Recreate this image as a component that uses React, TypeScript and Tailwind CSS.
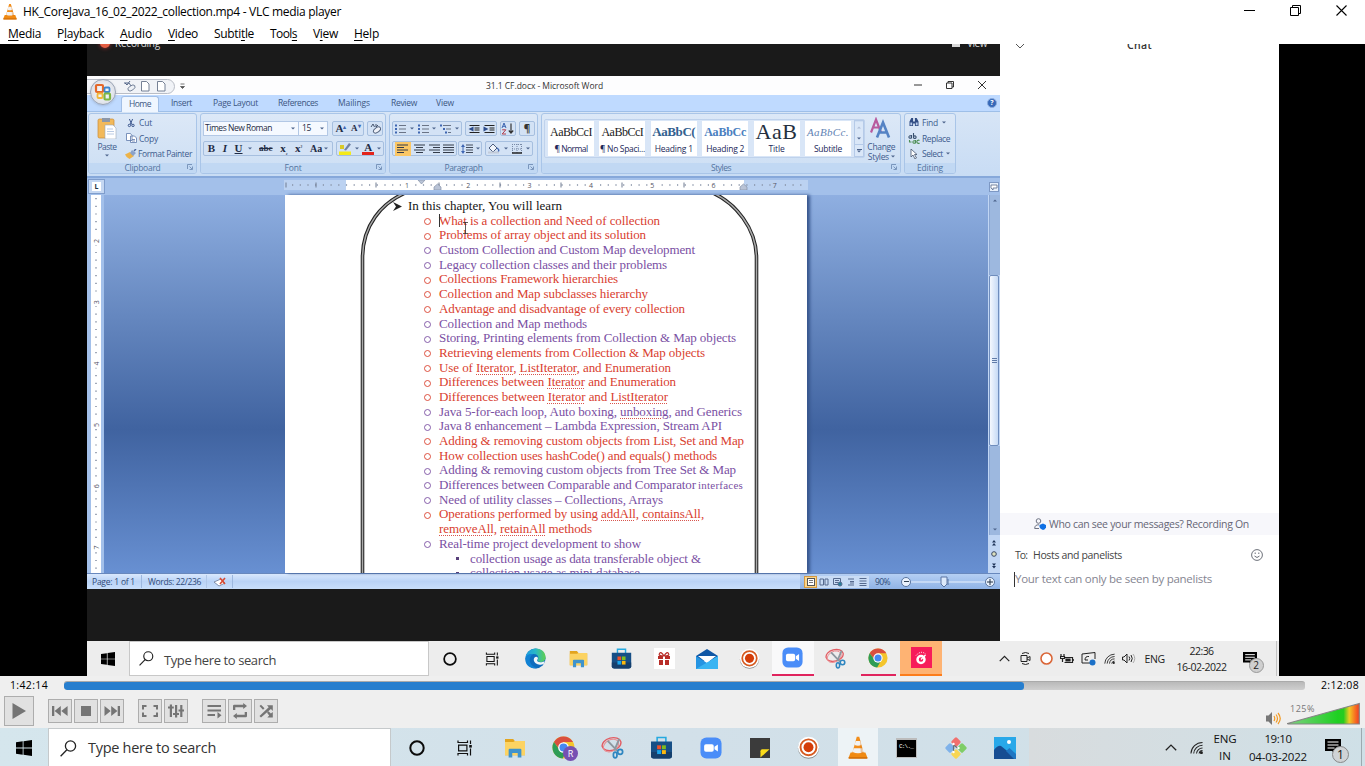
import React, { ReactNode, useLayoutEffect, useRef, useState } from 'react';

/* A run of text whose letter spacing is tuned so that it fills its box. */
function Fit({ className = '', children }: { className?: string; children: ReactNode }) {
  const box = useRef<HTMLSpanElement>(null);
  const run = useRef<HTMLSpanElement>(null);
  const [spacing, setSpacing] = useState(0);
  useLayoutEffect(() => {
    const b = box.current;
    const r = run.current;
    if (!b || !r) return;
    const count = (r.textContent || '').length;
    if (count > 0) setSpacing((b.getBoundingClientRect().width - r.getBoundingClientRect().width) / count);
  }, []);
  return (
    <span ref={box} className={`block shrink-0 whitespace-nowrap ${className}`}>
      <span ref={run} style={{ letterSpacing: spacing }}>{children}</span>
    </span>
  );
}

/* ---------- icons ---------- */

const Cone = ({ className }: { className: string }) => (
  <svg viewBox="0 0 24 28" className={className}>
    <path d="M3 20h18l2.500 6.500q0 1-1 1h-21q-1 0-1-1z" fill="#f08a12" />
    <path d="M.6 26h22.8v1.500H.6z" fill="#c96504" />
    <path d="M10.500 1h3l5.500 20q-7 4-14 0z" fill="#f28d1a" />
    <path d="M9.200 6h5.600l1.500 5q-4.300 1.800-8.600 0z" fill="#f2f2f2" />
    <path d="M6.700 15h10.600l1.300 4.500q-6.600 3-13.200 0z" fill="#f2f2f2" />
    <path d="M14 3l4.500 18q-1.500 1-3 1z" fill="#d96f08" opacity=".35" />
  </svg>
);

const WinLogo = ({ className }: { className: string }) => (
  <svg viewBox="0 0 16 16" className={className} fill="#000">
    <path d="M0 2.200 6.700 1.300v6.300H0zM7.500 1.200 16 0v7.600H7.500zM0 8.400h6.700v6.300L0 13.800zM7.500 8.400H16V16l-8.500-1.200z" />
  </svg>
);

const Lens = ({ className }: { className: string }) => (
  <svg viewBox="0 0 17 17" className={className} fill="none" stroke="#222" strokeWidth="1.3">
    <circle cx="10.500" cy="6" r="5.100" />
    <path d="M6.900 9.700.6 16.200" />
  </svg>
);

const Ring = ({ className }: { className: string }) => (
  <svg viewBox="0 0 16 16" className={className}>
    <circle cx="8" cy="8" r="6.700" fill="none" stroke="#0b0b0b" strokeWidth="2" />
  </svg>
);

const TaskView = ({ className }: { className: string }) => (
  <svg viewBox="0 0 16 16" className={className} fill="none" stroke="#111" strokeWidth="1.200">
    <path d="M1 .5v2h9.500v-2M1 15.500v-2h9.500v2M1.600 5.200h8.300v5.700H1.600zM13.500.5v3.500M13.500 8.500v7" />
    <path d="M12.200 5h2.600v2.600h-2.600z" fill="#111" stroke="none" />
  </svg>
);

const Edge = ({ className }: { className: string }) => (
  <svg viewBox="0 0 24 24" className={className}>
    <defs>
      <linearGradient id="edgeTop" x1="0" x2="1" y1="0.300" y2="0.300">
        <stop offset="0" stopColor="#1e9be0" />
        <stop offset=".5" stopColor="#2ab8c6" />
        <stop offset="1" stopColor="#5fd04e" />
      </linearGradient>
    </defs>
    <circle cx="12" cy="12" r="11.500" fill="#0f6cbd" />
    <path d="M.6 11C1.500 4.500 6.500.5 12.500.5 19 .5 23.500 5 23.500 10.500c0 3.500-2.500 5.500-5.500 5.500-2.200 0-3.700-1-3.700-2 0-.8 1-1.300 1-3 0-2.300-2.200-4.200-5.300-4.200C5.800 6.800 2 8.500.6 11z" fill="url(#edgeTop)" />
    <path d="M10 13.500c.3 3.500 4 6 8 5.500 2-.2 3.300-1 4-1.700l.5-2.300-2.500 1c-3 .9-6.200.2-6.200-1.900 0-.8 1-1.300 1-2.800-1.300-2.200-4.700-1.300-4.800 2.200z" fill="#f1f6fa" />
    <path d="M.5 12C1.500 7.500 6 6.300 9.500 7c-3 1.200-5 5-3.700 9 1.200 3.500 4.200 6.300 8.200 7C6.500 24.500-.5 19 .5 12z" fill="#1182d4" />
  </svg>
);

const Folder = ({ className }: { className: string }) => (
  <svg viewBox="0 0 24 22" className={className}>
    <path d="M1 1h9l2 2.500H22q1 0 1 1V19H1z" fill="#e3a51f" />
    <path d="M1 4.500h9l2-1.200h11V19H1z" fill="#fcd362" />
    <path d="M5 21.500V13q0-1.200 1.200-1.200h11.600q1.200 0 1.200 1.200v8.500h-4v-5H9v5z" fill="#3f93cc" />
  </svg>
);

const Store = ({ className }: { className: string }) => (
  <svg viewBox="0 0 24 26" className={className}>
    <path d="M7 7V1.500h10V7" fill="none" stroke="#25a9e0" strokeWidth="1.800" />
    <path d="M0 6h24v16.500q0 3-3 3H3q-3 0-3-3z" fill="#174f86" />
    <path d="M0 18h24v4.500q0 3-3 3H3q-3 0-3-3z" fill="#153f6d" />
    <path d="M7 10.500h4.500V15H7z" fill="#f0502a" />
    <path d="M12.500 10.500H17V15h-4.500z" fill="#80bc1c" />
    <path d="M7 16h4.500v4.500H7z" fill="#19a5ec" />
    <path d="M12.500 16H17v4.500h-4.500z" fill="#fdb90e" />
  </svg>
);

const ZoomApp = ({ className }: { className: string }) => (
  <svg viewBox="0 0 24 24" className={className}>
    <rect x=".5" y=".5" width="23" height="23" rx="6.500" fill="#4a8df8" />
    <rect x="4.500" y="7.800" width="10.500" height="8.400" rx="2" fill="#fff" />
    <path d="m15.800 10.700 3.700-2.600v7.800l-3.700-2.600z" fill="#fff" />
  </svg>
);

const Snip = ({ className }: { className: string }) => (
  <svg viewBox="0 0 24 24" className={className} fill="none">
    <ellipse cx="11" cy="8.500" rx="10" ry="6.500" transform="rotate(-15 11 8.500)" stroke="#e25c63" strokeWidth="1.500" />
    <ellipse cx="10.500" cy="10" rx="8.500" ry="6" transform="rotate(-28 10.500 10)" stroke="#eb8a8e" strokeWidth="1" />
    <path d="m7 5 10 10.500M19 3l-5 12" stroke="#8d979f" strokeWidth="2" />
    <circle cx="20" cy="16.500" r="2.600" stroke="#2f86c0" strokeWidth="1.800" />
    <ellipse cx="14.800" cy="19.800" rx="1.900" ry="3" stroke="#2f86c0" strokeWidth="1.800" />
  </svg>
);

const ChromeApp = ({ className }: { className: string }) => (
  <svg viewBox="0 0 24 24" className={className}>
    <circle cx="12" cy="12" r="11.500" fill="#f4c52c" />
    <path d="M2 6.300A11.500 11.500 0 0 1 22 6.300H12L8 14z" fill="#da4f3e" />
    <path d="M2 6.300A11.500 11.500 0 0 0 11 23.500l5-9-8 0z" fill="#2e9c56" />
    <circle cx="12" cy="12" r="5.600" fill="#fff" />
    <circle cx="12" cy="12" r="4.200" fill="#4688f1" />
  </svg>
);

const Recorder = ({ className }: { className: string }) => (
  <svg viewBox="0 0 24 24" className={className}>
    <circle cx="12" cy="12.800" r="11" fill="#8c8c8c" />
    <circle cx="12" cy="11.800" r="11" fill="#fff" />
    <circle cx="12" cy="11.800" r="8.300" fill="none" stroke="#d65a20" strokeWidth="2" />
    <circle cx="12" cy="11.800" r="5.200" fill="#d43d08" />
  </svg>
);

const Wifi = ({ className }: { className: string }) => (
  <svg viewBox="0 0 14 14" className={className} fill="none" stroke="#222" strokeWidth="1.100">
    <path d="M1 13.500A12.500 12.500 0 0 1 13.500 1.500M4 13.500a9.500 9.500 0 0 1 9.500-9M7 13.500a6.500 6.500 0 0 1 6.500-6M9.800 13.500a3.800 3.800 0 0 1 3.700-3.200" />
    <circle cx="12.300" cy="12.600" r="1" fill="#222" />
  </svg>
);

const Bubble = ({ className }: { className: string }) => (
  <svg viewBox="0 0 16 16" className={className}>
    <path d="M0 0h16v12h-5v4l-4-4H0z" fill="#000" />
    <path d="M2.500 3h11M2.500 6h11M2.500 9h7" stroke="#fff" strokeWidth="1.100" />
  </svg>
);

const Up = ({ className }: { className: string }) => (
  <svg viewBox="0 0 12 7" className={className} fill="none" stroke="#222" strokeWidth="1.300">
    <path d="m.8 6.300 5.200-5.200 5.200 5.200" />
  </svg>
);

const Drop = () => (
  <svg viewBox="0 0 4 3" className="h-[3px] w-[4px] shrink-0"><path d="M0 .5h4L2 2.500z" fill="#4d648c" /></svg>
);

const Launcher = () => (
  <svg viewBox="0 0 6 6" className="h-[6px] w-[6px]" fill="none" stroke="#6885ad" strokeWidth=".8">
    <path d="M.5 5V.5H5M2.500 2.500l2.500 2.500M5.500 2.500v3h-3" />
  </svg>
);

/* ---------- VLC window ---------- */

const ui = "font-['Open_Sans',sans-serif]";

function TitleBar() {
  return (
    <div className="flex h-[23px] items-center bg-white">
      <Cone className="ml-[3px] h-[17px] w-[14px]" />
      <Fit className="ml-[6px] w-[318px] text-[12px] leading-[16px]">HK_CoreJava_16_02_2022_collection.mp4 - VLC media player</Fit>
      <div className="-mt-[3px] ml-auto flex items-center gap-[35px] pr-[18px]">
        <svg viewBox="0 0 11 11" className="h-[11px] w-[11px]"><path d="M0 5.500h11" stroke="#000" /></svg>
        <svg viewBox="0 0 11 11" className="h-[11px] w-[11px]" fill="none" stroke="#000"><path d="M.5 2.500h8v8h-8zM2.500 2.500v-2h8v8h-2" /></svg>
        <svg viewBox="0 0 11 11" className="h-[11px] w-[11px]"><path d="m.5.5 10 10m0-10-10 10" stroke="#000" strokeWidth="1.100" /></svg>
      </div>
    </div>
  );
}

function MenuBar() {
  const items: [string, string, string, string][] = [
    ['', 'M', 'edia', 'w-[33px]'],
    ['P', 'l', 'ayback', 'w-[47px]'],
    ['', 'A', 'udio', 'w-[32px]'],
    ['', 'V', 'ideo', 'w-[30px]'],
    ['Subti', 't', 'le', 'w-[40px]'],
    ['Tool', 's', '', 'w-[27px]'],
    ['V', 'i', 'ew', 'w-[25px]'],
    ['', 'H', 'elp', 'w-[25px]'],
  ];
  return (
    <div className="flex h-[21px] items-center gap-4 bg-white pl-2 text-[12px] leading-[18px] text-black">
      {items.map(([a, b, c, w]) => (
        <Fit key={a + b + c} className={w}>{a}<u className="underline-offset-2">{b}</u>{c}</Fit>
      ))}
    </div>
  );
}

function Btn({ children, big = false, className = '' }: { children: ReactNode; big?: boolean; className?: string }) {
  return (
    <div className={`flex items-center justify-center border border-[#adadad] bg-[#e1e1e1] ${big ? 'h-[30px] w-[30px]' : 'h-[24px] w-[24px]'} ${className}`}>
      <svg viewBox="0 0 16 16" className={big ? 'h-[16px] w-[16px]' : 'h-[16px] w-[16px]'} fill="#757575" stroke="none">{children}</svg>
    </div>
  );
}

function Player() {
  return (
    <div className="h-[52px] bg-[#efefef]">
      <div className="flex h-[20px] items-center text-[10.5px] text-black">
        <Fit className="ml-[10px] w-[38px]">1:42:14</Fit>
        <div className="-mt-[2px] ml-[16px] h-[9px] w-[1241px] overflow-hidden rounded-[3px] border-t border-[#aaa] bg-linear-to-b from-[#b9b9b9] to-[#cfcfcf]">
          <div className="h-full w-[960px] rounded-[3px] bg-[#277ece]" />
        </div>
        <Fit className="ml-[16px] w-[38px]">2:12:08</Fit>
      </div>
      <div className="flex h-[30px] items-center pl-[4px]">
        <Btn big><path d="M1.500 0 15 8 1.500 16z" /></Btn>
        <Btn className="ml-[14px]"><path d="M0 3h2.300v10H0zM8.800 3v10L2.600 8zM15.600 3v10L9.300 8z" /></Btn>
        <Btn className="ml-[2px]"><path d="M3 3h10v10H3z" /></Btn>
        <Btn className="ml-[2px]"><path d="M13.700 3H16v10h-2.300zM7.200 3v10l6.200-5zM.5 3v10l6.200-5z" /></Btn>
        <Btn className="ml-[14px]"><path d="M0 2h4.500v2H2v2.500H0zM11.500 2H16v4.500h-2V4h-2.500zM0 9.500h2V12h2.500v2H0zM14 9.500h2V14h-4.500v-2H14z" /></Btn>
        <Btn className="ml-[2px]"><path d="M1.800 1.500H4V14H1.800zM0 3.500h5.800v2H0zM7 2h2.200v12.500H7zM5 10h6v2H5zM12.200 2h2.200v12h-2.200zM10.500 6.500H16v2h-5.500z" /></Btn>
        <Btn className="ml-[14px]"><path d="M1.500 2H15v2H1.500zM1.500 6.500H15v2H1.500zM1.500 11H9v2H1.500zM11.500 9v6.500l4-3.200z" /></Btn>
        <Btn className="ml-[2px]"><path d="M1 7V3q0-1.200 1.200-1.200h9V0L15 3l-3.800 3V4.200H3.300V7zM15 9v4q0 1.200-1.200 1.200h-9V16L1 13l3.800-3v1.800h7.900V9z" /></Btn>
        <Btn className="ml-[2px]"><path d="M1.500 3 3 1.700l3.500 3.500L5 6.700zM1.500 13 10.700 4.200 9 2.200h5.800V8l-1.900-2L3 14.500zM9 9.700l1.500-1.500 2.400 2.300L14.800 9v5.500H9.300l1.900-2z" /></Btn>
        <svg viewBox="0 0 15 13" className="mt-[14px] ml-[988px] h-[13px] w-[15px]">
          <path d="M0 3.500h2.500L6 0v13L2.500 9.500H0z" fill="#777" />
          <path d="M8 4q1.500 2.500 0 5M10 2.500q3 4 0 8M12 1q4.500 5.500 0 11" fill="none" stroke="#f39a22" strokeWidth="1.200" />
        </svg>
        <div className="relative mt-[5px] ml-[6px] h-[24px] w-[73px]">
          <svg viewBox="0 0 73 24" className="h-[24px] w-[73px]">
            <defs>
              <linearGradient id="vol">
                <stop offset="0" stopColor="#7fd083" /><stop offset=".7" stopColor="#1fd022" />
                <stop offset=".78" stopColor="#27cc20" /><stop offset=".86" stopColor="#efcc24" />
                <stop offset=".93" stopColor="#f77d22" /><stop offset="1" stopColor="#f13a22" />
              </linearGradient>
            </defs>
            <path d="M.5 21.500 72.300 1.500v20.500H1z" fill="url(#vol)" stroke="#858585" strokeWidth="1.200" />
          </svg>
          <Fit className="absolute top-[1px] left-[3px] w-[25px] text-[9px] leading-[12px] text-[#777]">125%</Fit>
        </div>
      </div>
    </div>
  );
}

function Slot({ children, className = '' }: { children: ReactNode; className?: string }) {
  return <div className={`flex h-full w-[49px] shrink-0 items-center justify-center ${className}`}>{children}</div>;
}

function HostTaskbar() {
  return (
    <div className="flex h-[38px] bg-linear-to-r from-[#d5e6ed] via-[#d2e0e9] to-[#cfe0e7]">
      <div className="flex w-[48px] items-center justify-center"><WinLogo className="mt-[2px] h-[16px] w-[16px]" /></div>
      <div className="flex w-[343px] items-center border border-b-0 border-[#c5c9cb] bg-white pt-px pl-[11px]">
        <Lens className="h-[17px] w-[17px]" />
        <Fit className="ml-[11px] w-[128px] text-[14.5px] text-[#333]">Type here to search</Fit>
      </div>
      <div className="flex h-full pt-[1px] pl-px">
        <Slot><Ring className="h-[16px] w-[16px]" /></Slot>
        <Slot><TaskView className="ml-[-2px] h-[16px] w-[16px]" /></Slot>
        <Slot><Folder className="h-[20px] w-[22px]" /></Slot>
        <Slot>
          <div className="relative">
            <ChromeApp className="h-[23px] w-[23px]" />
            <span className="absolute top-[10px] left-[11px] flex h-[15px] w-[15px] items-center justify-center rounded-full bg-[#7650b2] text-[9px] text-white">R</span>
          </div>
        </Slot>
        <Slot><Snip className="h-[23px] w-[23px]" /></Slot>
        <Slot><Store className="h-[23px] w-[21px]" /></Slot>
        <Slot><ZoomApp className="h-[24px] w-[22px]" /></Slot>
        <Slot>
          <svg viewBox="0 0 22 22" className="h-[22px] w-[20px]"><path d="M0 0h22v22H0z" fill="#3b3b3b" /><path d="M11.500 21.500v-7q0-2 2-2h8z" fill="#fbdc1a" /></svg>
        </Slot>
        <Slot><Recorder className="h-[23px] w-[23px]" /></Slot>
        <div className="-mt-[1px] flex h-[38px] w-[49px] justify-center">
          <div className="flex w-[40px] items-center justify-center bg-[#edf3f6]"><Cone className="h-[23px] w-[20px]" /></div>
        </div>
        <Slot>
          <div className="h-[20px] w-[21px] border border-t-2 border-[#bcbcbc] bg-black pt-[3px] pl-[2px] font-['Liberation_Mono',monospace] text-[6px] leading-[7px] text-white"><Fit className="w-[14px]">C:\._</Fit></div>
        </Slot>
        <Slot>
          <svg viewBox="0 0 24 24" className="h-[24px] w-[24px]">
            <g transform="rotate(45 12 12)">
              <rect x="4" y="4" width="7.500" height="7.500" rx="1.500" fill="#f1706e" /><rect x="12.500" y="4" width="7.500" height="7.500" rx="1.500" fill="#7fcd67" />
              <rect x="4" y="12.500" width="7.500" height="7.500" rx="1.500" fill="#7fb2ea" /><rect x="12.500" y="12.500" width="7.500" height="7.500" rx="1.500" fill="#f8d653" />
            </g>
            <path d="M9.500 8v8M9.500 9l4 3" stroke="#67727a" strokeWidth="1.200" />
            <circle cx="9.500" cy="8" r="1.200" fill="#fff" /><circle cx="9.500" cy="16" r="1.200" fill="#fff" /><circle cx="14.500" cy="12" r="1.200" fill="#fff" />
          </svg>
        </Slot>
        <Slot>
          <svg viewBox="0 0 22 22" className="h-[22px] w-[22px]"><path d="M0 0h22v22H0z" fill="#28a8e9" /><path d="M0 13q4-5 7-4l15 12v1H0z" fill="#174d92" /><path d="m12 14 3.500-3L22 17v5h-2z" fill="#1f76c2" /><circle cx="15" cy="5" r="2" fill="#fff" /></svg>
        </Slot>
      </div>
      <div className="flex flex-1 items-center bg-linear-to-r from-[#d8dcde] to-[#cfe0e7]">
        <Up className="ml-[136px] h-[7px] w-[12px]" />
        <Wifi className="ml-[13px] h-[13px] w-[13px]" />
        <div className="ml-[10px] flex w-[24px] flex-col items-center gap-[2px] text-[11.5px] leading-[15px] text-[#111]">
          <Fit className="w-[23px]">ENG</Fit><Fit className="w-[12px]">IN</Fit>
        </div>
        <div className="ml-[12px] flex w-[58px] flex-col items-center gap-[3px] text-[11.5px] leading-[15px] text-[#111]">
          <Fit className="w-[27px]">19:10</Fit><Fit className="w-[58px]">04-03-2022</Fit>
        </div>
        <div className="relative ml-[18px]">
          <Bubble className="h-[16px] w-[16px]" />
          <span className="absolute top-[7px] left-[7px] flex h-[17px] w-[17px] items-center justify-center rounded-full border border-[#888] bg-[#cfd3d5] text-[12px] text-[#111]">1</span>
        </div>
        <div className="ml-auto h-full w-[4px] border-l border-[#9caab0]" />
      </div>
    </div>
  );
}

/* ---------- Word window ---------- */

function WordTitle() {
  return (
    <div className="relative flex h-[19px] items-center bg-[#fdfdfe]">
      <div className="-ml-[2px] mt-[1px] h-[15px] w-[90px] rounded-r-full border border-[#b9bdc6] bg-[#f1f3f7]" />
      <svg viewBox="0 0 70 12" className="-ml-[52px] h-[12px] w-[70px]">
        <path d="M1 3h5l2 3M2 3l2 2 3-4" stroke="#56688a" fill="none" /><ellipse cx="8.500" cy="8" rx="4" ry="2.300" transform="rotate(-35 8.500 8)" fill="#eef1f6" stroke="#63718b" strokeWidth=".8" />
        <path d="M18.500 1.500h5l2.500 2.500v7h-7.500zM34.500 1.500h5l2.500 2.500v7h-7.500z" fill="#fff" stroke="#68748a" strokeWidth=".9" />
        <path d="M57.500 4h4M57.500 6.500h4l-2 2z" stroke="#555" strokeWidth=".8" fill="#555" />
      </svg>
      <Fit className="ml-[293px] w-[117px] text-[8.5px] leading-[12px] text-[#333]">31.1 CF.docx  -  Microsoft Word</Fit>
      <div className="-mt-px ml-auto flex items-center gap-[24px] pr-[14px]">
        <svg viewBox="0 0 8 8" className="h-[8px] w-[8px]"><path d="M0 4h8" stroke="#333" /></svg>
        <svg viewBox="0 0 8 8" className="h-[8px] w-[8px]" fill="none" stroke="#333"><path d="M.5 2h5.500v5.500H.5zM2 2V.5h5.500V6H6" /></svg>
        <svg viewBox="0 0 8 8" className="h-[8px] w-[8px]"><path d="m0 0 8 8m0-8-8 8" stroke="#333" /></svg>
      </div>
      <div className="absolute top-[3px] left-[3px] z-10 flex h-[26px] w-[26px] items-center justify-center rounded-full border border-[#9aa3b4] bg-radial from-white to-[#cfd4df] shadow">
        <svg viewBox="0 0 18 18" className="h-[18px] w-[18px]" fill="none" strokeWidth="2.200">
          <rect x="2" y="2" width="7" height="7" rx="1" stroke="#e4682a" /><rect x="10.500" y="4.500" width="5" height="4.500" rx="1" stroke="#3d86cf" strokeWidth="1.800" />
          <rect x="3.500" y="10.500" width="5" height="4.500" rx="1" stroke="#f1b73a" strokeWidth="1.800" /><rect x="10.500" y="10.500" width="5.500" height="6" rx="1" stroke="#7eb544" />
        </svg>
      </div>
    </div>
  );
}

function Tabs() {
  return (
    <div className="flex h-[16px] items-center bg-[#bfdaff] pl-[34px] text-[8.5px] leading-[12px] text-[#3c5682]">
      <div className="mt-px flex h-[16px] w-[38px] items-center justify-center rounded-t-[3px] border border-b-0 border-[#a2bfe6] bg-[#eff6ff]"><Fit className="w-[22px]">Home</Fit></div>
      <Fit className="ml-[12px] w-[21px]">Insert</Fit>
      <Fit className="ml-[21px] w-[45px]">Page Layout</Fit>
      <Fit className="ml-[20px] w-[40px]">References</Fit>
      <Fit className="ml-[20px] w-[32px]">Mailings</Fit>
      <Fit className="ml-[21px] w-[26px]">Review</Fit>
      <Fit className="ml-[19px] w-[18px]">View</Fit>
      <div className="mr-[3px] ml-auto flex h-[10px] w-[10px] items-center justify-center rounded-full border border-[#8babdd] bg-[#3668b8] text-[7px] font-bold text-white">?</div>
    </div>
  );
}

function Group({ label, labelWidth, width, children, launcher = true }: { label: string; labelWidth: string; width: string; children: ReactNode; launcher?: boolean }) {
  return (
    <div className={`flex h-[61px] shrink-0 flex-col overflow-hidden rounded-[3px] border border-[#a9c5e8] bg-linear-to-b from-[#dce8f7] to-[#cddff4] ${width}`}>
      <div className="h-[49px]">{children}</div>
      <div className="relative flex h-[10px] items-center justify-center bg-[#c1d8f3] text-[8.5px] leading-[10px] text-[#53749f]">
        <Fit className={labelWidth}>{label}</Fit>
        {launcher && <div className="absolute top-[1px] right-[3px]"><Launcher /></div>}
      </div>
    </div>
  );
}

const box = 'flex h-[15px] shrink-0 items-center justify-around rounded-[2px] border border-[#a6bfdf] bg-[#d3e2f5]';

const Lines = ({ d }: { d: string }) => (
  <svg viewBox="0 0 11 10" className="h-[10px] w-[11px]"><path d={d} stroke="#333b49" strokeWidth="1.200" fill="none" /></svg>
);
const Bullets = ({ kind }: { kind: number }) => (
  <svg viewBox="0 0 11 10" className="h-[10px] w-[11px]" fill="none" strokeWidth="1.100">
    <path d={kind === 2 ? 'M0 1.500h2M3 5h2M5 8.500h2' : 'M0 1.500h2M0 5h2M0 8.500h2'} stroke="#3f66b2" strokeWidth="1.800" />
    <path d={kind === 2 ? 'M3 1.500h8M6 5h5M8 8.500h3' : 'M4 1.500h7M4 5h7M4 8.500h7'} stroke="#6a7486" />
  </svg>
);
const Indent = ({ d }: { d: string }) => (
  <svg viewBox="0 0 11 10" className="h-[10px] w-[12px]"><path d="M1 1.500h10M6 4h5M6 6h5M1 8.500h10" stroke="#222" strokeWidth="1.200" /><path d={d} fill="#2d4c8c" /></svg>
);
const Eraser = () => (
  <svg viewBox="0 0 11 11" className="h-[11px] w-[11px]" fill="none"><path d="M1 4 3 1l1.500 3M6 1v3l2-2" stroke="#46556e" /><ellipse cx="7" cy="7" rx="4" ry="2.300" transform="rotate(-35 7 7)" fill="#eef1f8" stroke="#56657f" /></svg>
);

function Clipboard() {
  return (
    <Group label="Clipboard" labelWidth="w-[36px]" width="w-[109px]">
      <div className="flex text-[8.5px] leading-[11px] text-[#3d5b8d]">
        <div className="flex w-[36px] flex-col items-center pt-[3px]">
          <svg viewBox="0 0 20 22" className="h-[22px] w-[20px]">
            <rect x="1" y="2" width="16" height="19" rx="1.500" fill="#f2b95a" stroke="#c98b36" strokeWidth=".7" /><path d="M5 1h8v4H5z" fill="#8c97a8" />
            <path d="M8 8h8l3 3v11H8z" fill="#fff" stroke="#9aa7bb" strokeWidth=".6" /><path d="M10 12h6M10 14.500h7M10 17h7" stroke="#a8bedd" strokeWidth=".8" />
          </svg>
          <Fit className="mt-[2px] w-[19px]">Paste</Fit>
          <div className="mt-[2px]"><Drop /></div>
        </div>
        <div className="flex flex-col pt-[1px]">
          <div className="flex h-[15.6px] items-center gap-[5px]">
            <svg viewBox="0 0 10 10" className="ml-[2px] h-[10px] w-[8px]" fill="none" stroke="#37538b" strokeWidth="1.200"><path d="M3 0l3 7M7 0 4 7" /><circle cx="3" cy="8" r="1.500" /><circle cx="7.500" cy="8" r="1.500" /></svg>
            <Fit className="-ml-[1px] w-[13px]">Cut</Fit>
          </div>
          <div className="flex h-[15.6px] items-center gap-[3px]">
            <svg viewBox="0 0 11 10" className="ml-[1px] h-[10px] w-[11px]" fill="#fff" stroke="#5d79ab" strokeWidth=".8"><path d="M.5.5h4l1.500 2v5H.5zM4.500 3h4l2 2v4.500h-6z" /><path d="M6 6.500h3M6 8h3" /></svg>
            <Fit className="-ml-[1px] w-[19px]">Copy</Fit>
          </div>
          <div className="flex h-[15.6px] items-center gap-[2px]">
            <svg viewBox="0 0 12 10" className="h-[10px] w-[12px]"><path d="M0 5.500 5 3l4 4-4.500 3q-3-1-4.500-4.500z" fill="#ecb349" /><path d="M7 1l4 3-3 3-3-3z" fill="#8aa2cb" /><path d="m9 2 2-2" stroke="#4b659a" strokeWidth="1.500" /></svg>
            <Fit className="-ml-[1px] w-[54px]">Format Painter</Fit>
          </div>
        </div>
      </div>
    </Group>
  );
}

const serif = "font-['Liberation_Serif',serif]";

function FontGroup() {
  return (
    <Group label="Font" labelWidth="w-[17px]" width="w-[186px]">
      <div className="flex flex-col gap-[5px] px-[2px] pt-[7px] text-[#1f2c45]">
        <div className="flex items-center">
          <div className="flex h-[15px] w-[96px] items-center justify-between border border-[#b3c8e5] bg-[#f5f9ff] pr-[3px] pl-[1px] text-[8.5px]"><Fit className="w-[67px]">Times New Roman</Fit><Drop /></div>
          <div className="flex h-[15px] w-[29px] items-center justify-between border border-l-0 border-[#b3c8e5] bg-[#f5f9ff] pr-[3px] pl-[3px] text-[8.5px]"><Fit className="w-[9px]">15</Fit><Drop /></div>
          <div className={`${box} ml-[4px] w-[32px] ${serif} font-bold`}><span className="text-[11px]">A<sup className="text-[6px] text-[#3f66b2]">▴</sup></span><span className="text-[9px]">A<sup className="text-[6px] text-[#3f66b2]">▾</sup></span></div>
          <div className={`${box} ml-[3px] w-[16px]`}><Eraser /></div>
        </div>
        <div className="flex items-center">
          <div className={`${box} w-[130px] ${serif} text-[11px] font-bold`}>
            <span>B</span><span className="italic">I</span><span className="flex items-center gap-[5px]"><u>U</u><Drop /></span><s className="text-[9px]">abc</s><span>x<sub className="text-[6px]">₂</sub></span><span>x<sup className="text-[6px]">²</sup></span><span className="flex items-center gap-[2px] text-[10px]">Aa<Drop /></span>
          </div>
          <div className={`${box} ml-[3px] w-[48px]`}>
            <svg viewBox="0 0 13 13" className="h-[13px] w-[13px]"><path d="M0 9.500h12V13H0z" fill="#f5ea1b" /><path d="M1 3h4v4H1z" fill="#d9c928" /><path d="m5 8 5-7 2 1.500-5 6z" fill="#7183a5" /></svg><Drop />
            <div className={`flex h-[13px] w-[12px] flex-col items-center border-b-[3px] border-[#e3241c] ${serif} text-[11px] leading-[10px] font-bold`}>A</div><Drop />
          </div>
        </div>
      </div>
    </Group>
  );
}

function ParagraphGroup() {
  return (
    <Group label="Paragraph" labelWidth="w-[38px]" width="w-[149px]">
      <div className="flex flex-col gap-[5px] pt-[7px] pl-[2px]">
        <div className="flex items-center">
          <div className={`${box} w-[70px]`}><Bullets kind={0} /><Drop /><Bullets kind={1} /><Drop /><Bullets kind={2} /><Drop /></div>
          <div className={`${box} ml-[3px] w-[32px]`}><Indent d="M5 2.500v5L0 5z" /><Indent d="M0 2.500v5L5 5z" /></div>
          <div className={`${box} ml-[3px] w-[16px]`}>
            <svg viewBox="0 0 14 13" className="h-[13px] w-[14px]" fill="none">
              <path d="m1 6 2-5 2 5M2 4.300h2.200" stroke="#3c64b0" /><path d="M1.200 7.800h3.600L1.200 12h3.800" stroke="#b13c4a" /><path d="M10 1.500v9M7.800 8.500l2.200 2.500 2.200-2.500" stroke="#333" strokeWidth="1.200" />
            </svg>
          </div>
          <div className={`${box} ml-[3px] w-[16px] text-[10px] font-bold text-[#333]`}>¶</div>
        </div>
        <div className="flex items-center">
          <div className={`${box} w-[65px]`}>
            <div className="flex h-[14px] w-[16px] items-center justify-center bg-[#fbc765]"><Lines d="M0 1h11M0 3.500h7M0 6h11M0 8.500h7" /></div>
            <Lines d="M0 1h11M2 3.500h7M0 6h11M2 8.500h7" /><Lines d="M0 1h11M4 3.500h7M0 6h11M4 8.500h7" /><Lines d="M0 1h11M0 3.500h11M0 6h11M0 8.500h11" />
          </div>
          <div className={`${box} ml-[1px] w-[24px]`}>
            <svg viewBox="0 0 12 10" className="h-[10px] w-[12px]"><path d="M5 1h7M5 3.500h7M5 6h7M5 8.500h7" stroke="#444d5c" strokeWidth="1.100" /><path d="M2 0 0 3h1.500v4H0l2 3 2-3H2.500V3H4z" fill="#3f66b2" /></svg><Drop />
          </div>
          <div className={`${box} ml-[3px] w-[48px]`}>
            <svg viewBox="0 0 12 11" className="h-[11px] w-[12px]"><path d="m1 5 4-4 4 4-4 4z" fill="#f0f4fa" stroke="#4c5d7e" /><path d="M9 5q3 2 1 4" stroke="#3f66b2" strokeWidth="1.400" fill="none" /><path d="M0 9.500h11" stroke="#c3cbd9" strokeWidth="2" /></svg><Drop />
            <svg viewBox="0 0 10 10" className="h-[10px] w-[10px]"><path d="M.5 0v9M5 0v9M9.500 0v9M0 .5h10M0 5h10" stroke="#7889a6" strokeDasharray="1 1" /><path d="M0 9h10" stroke="#222" strokeWidth="1.300" /></svg><Drop />
          </div>
        </div>
      </div>
    </Group>
  );
}

function StylesGroup() {
  const cards = [
    { s: 'AaBbCcI', c: 'w-[42px] text-[12px] text-[#222]', n: '¶ Normal', w: 'w-[33px]' },
    { s: 'AaBbCcI', c: 'w-[42px] text-[12px] text-[#222]', n: '¶ No Spaci...', w: 'w-[45px]' },
    { s: 'AaBbC(', c: 'w-[43px] text-[13px] font-bold text-[#33618f]', n: 'Heading 1', w: 'w-[38px]' },
    { s: 'AaBbCc', c: 'w-[42px] text-[12px] font-bold text-[#4a80c0]', n: 'Heading 2', w: 'w-[38px]' },
    { s: 'AaB', c: 'w-[42px] text-[22px] text-[#25303f]', n: 'Title', w: 'w-[16px]' },
    { s: 'AaBbCc.', c: 'w-[42px] text-[11px] italic text-[#5f83b4]', n: 'Subtitle', w: 'w-[28px]' },
  ];
  return (
    <Group label="Styles" labelWidth="w-[20px]" width="w-[360px]">
      <div className="flex pt-[5px] pl-[2px]">
        <div className="flex h-[39px] items-center gap-[5.4px] rounded-[2px] border border-[#bfd2ec] bg-[#d9e6f7] pl-[3px]">
          {cards.map((card, i) => (
            <div key={i} className="flex h-[35px] w-[46px] flex-col items-center overflow-hidden bg-white">
              <div className={`flex h-[22px] items-center leading-[22px] ${serif}`}><Fit className={card.c}>{card.s}</Fit></div>
              <Fit className={`text-[8.500px] leading-[11px] text-[#22285a] ${card.w}`}>{card.n}</Fit>
            </div>
          ))}
          <div className="-ml-[2px] flex h-[37px] w-[10px] flex-col divide-y divide-[#b5cae8] border border-[#b5cae8] bg-[#dae7f8]">
            <div className="flex flex-1 rotate-180 items-center justify-center opacity-30"><Drop /></div>
            <div className="flex flex-1 items-center justify-center"><Drop /></div>
            <div className="flex flex-1 flex-col items-center justify-center"><div className="h-px w-[5px] bg-[#4d648c]" /><Drop /></div>
          </div>
        </div>
        <div className="ml-[2px] flex flex-col items-center text-[8.500px] leading-[9.500px] text-[#3d5b8d]">
          <svg viewBox="0 0 22 22" className="-mt-[2px] h-[23px] w-[22px]" fill="none" strokeWidth="2.200"><path d="M1 15 6 2l5 13M3 10h6" stroke="#b85b9e" /><path d="m7 20 6-15 6 15M9.500 15h8" stroke="#5583c4" strokeWidth="2.600" /></svg>
          <Fit className="mt-[2px] w-[28px]">Change</Fit>
          <div className="flex items-center gap-[2px]"><Fit className="w-[21px]">Styles</Fit><Drop /></div>
        </div>
      </div>
    </Group>
  );
}

function EditingGroup() {
  return (
    <Group label="Editing" labelWidth="w-[26px]" width="w-[52px]" launcher={false}>
      <div className="flex flex-col pt-[1px] pl-[3px] text-[8.500px] leading-[11px] text-[#3d5b8d]">
        <div className="flex h-[15.600px] items-center"><svg viewBox="0 0 12 10" className="h-[9px] w-[12px]" fill="#2f4b82"><path d="M1 4 3 0h2v4h2V0h2l2 4v5H7V6H5v3H1z" /><path d="M2 5h2v3H2zM8 5h2v3H8z" fill="#b8cbeb" /></svg><Fit className="mr-[4px] ml-[2px] w-[16px]">Find</Fit><Drop /></div>
        <div className="flex h-[15.600px] items-center">
          <svg viewBox="0 0 12 11" className="h-[11px] w-[12px]" fill="none" strokeWidth="1.100"><path d="M3.500 2v3.500M3.500 3.800a1.300 1.300 0 1 0 0 .4M5.500 0v5.500M5.500 4a1.300 1.300 0 1 1 0 .3" stroke="#38506f" /><path d="M7.500 7v3.500M7.500 8.800a1.300 1.300 0 1 0 0 .4M11.500 7.500a1.600 1.600 0 1 0 0 2.500M1.500 7v2h2" stroke="#4e8f56" /></svg>
          <Fit className="ml-[2px] w-[28px]">Replace</Fit>
        </div>
        <div className="flex h-[15.600px] items-center"><svg viewBox="0 0 12 10" className="h-[10px] w-[12px]"><path d="M3 0v8l2-2 2 4 1.500-1-2-3.500H9z" fill="#fff" stroke="#48566f" strokeWidth=".8" /></svg><Fit className="mr-[3px] ml-[2px] w-[21px]">Select</Fit><Drop /></div>
      </div>
    </Group>
  );
}

function Ruler() {
  const nums = ['1', '2', '3', '4', '5', '6', '7'];
  return (
    <div className="flex h-[17px] bg-[#a3c0ea]">
      <div className="m-px mr-0 flex h-[15px] w-[17px] items-center justify-center border border-[#7f9dcc] bg-[#c4d7f2]"><span className="flex h-[9px] w-[9px] items-center justify-center bg-white text-[7px] leading-none font-bold text-[#234]">L</span></div>
      <div className="mt-[2px] ml-[179px] flex h-[10px] w-[524px] items-center bg-[#bcd2f1]">
        <svg viewBox="0 0 524 10" className="h-[10px] w-[524px]">
          <path d="M62 0h398v10H62z" fill="#fff" />
          <path d="M8 5H520" stroke="#8792a6" strokeWidth="1.500" strokeDasharray="1.200 6.500" />
          <path d="M2 2.500v5M32 2.500v5M92 2.500v5M155 2.500v5M216 2.500v5M277 2.500v5M338 2.500v5M400 2.500v5" stroke="#707c92" />
          {nums.map((n, i) => (
            <g key={n}><path d={`M${119 + i * 61.3} 0h9v10h-9z`} fill={i < 6 ? '#fff' : '#bcd2f1'} /><text x={121 + i * 61.3} y="8" fontSize="7" fill="#556">{n}</text></g>
          ))}
          <path d="M134 0h7l-3.500 4zM150 10V7l3.500-3L157 7v3zM456 10V7l3.500-3L463 7v3z" fill="#b9c3d6" stroke="#8793a9" strokeWidth=".7" />
        </svg>
      </div>
      <div className="mt-[4px] mr-[1px] ml-auto h-[10px] w-[10px] border border-[#7d98c4] bg-[#e6effb]"><svg viewBox="0 0 8 8" className="h-[8px] w-[8px]"><path d="M1 2h6v3H3v2L1 5z" fill="#fff" stroke="#596b8c" strokeWidth=".8" /></svg></div>
    </div>
  );
}

const Sp = ({ children }: { children: ReactNode }) => (
  <span className="underline decoration-[#d8554d] decoration-dotted decoration-1 underline-offset-2">{children}</span>
);

function Document() {
  const R = 'text-[#d9402f]';
  const P = 'text-[#7a4fa3]';
  const rows: { t: ReactNode; c: string; w: string; extra?: boolean; cont?: boolean }[] = [
    { t: 'What is a collection and Need of collection', c: R, w: 'w-[221px]' },
    { t: 'Problems of array object and its solution', c: R, w: 'w-[207px]' },
    { t: 'Custom Collection and Custom Map development', c: P, w: 'w-[256px]' },
    { t: 'Legacy collection classes and their problems', c: P, w: 'w-[228px]' },
    { t: 'Collections Framework hierarchies', c: R, w: 'w-[179px]' },
    { t: 'Collection and Map subclasses hierarchy', c: R, w: 'w-[209px]' },
    { t: 'Advantage and disadvantage of every collection', c: R, w: 'w-[246px]' },
    { t: 'Collection and Map methods', c: P, w: 'w-[148px]' },
    { t: 'Storing, Printing elements from Collection & Map objects', c: P, w: 'w-[297px]' },
    { t: 'Retrieving elements from Collection & Map objects', c: R, w: 'w-[266px]' },
    { t: <>Use of <Sp>Iterator</Sp>, <Sp>ListIterator</Sp>, and Enumeration</>, c: R, w: 'w-[232px]' },
    { t: <>Differences between <Sp>Iterator</Sp> and Enumeration</>, c: R, w: 'w-[237px]' },
    { t: <>Differences between <Sp>Iterator</Sp> and <Sp>ListIterator</Sp></>, c: R, w: 'w-[229px]' },
    { t: <>Java 5-for-each loop, Auto boxing, <Sp>unboxing</Sp>, and Generics</>, c: P, w: 'w-[303px]' },
    { t: 'Java 8 enhancement – Lambda Expression, Stream API', c: P, w: 'w-[283px]' },
    { t: 'Adding & removing custom objects from List, Set and Map', c: R, w: 'w-[305px]' },
    { t: 'How collection uses hashCode() and equals() methods', c: R, w: 'w-[278px]' },
    { t: 'Adding & removing custom objects from Tree Set & Map', c: P, w: 'w-[297px]' },
    { t: 'Differences between Comparable and Comparator', c: P, w: 'w-[257px]', extra: true },
    { t: 'Need of utility classes – Collections, Arrays', c: P, w: 'w-[224px]' },
    { t: <>Operations performed by using <Sp>addAll</Sp>, <Sp>containsAll</Sp>,</>, c: R, w: 'w-[265px]' },
    { t: <><Sp>removeAll</Sp>, <Sp>retainAll</Sp> methods</>, c: R, w: 'w-[153px]', cont: true },
    { t: 'Real-time project development to show', c: P, w: 'w-[202px]' },
  ];
  return (
    <div className={`relative h-[378px] w-[522px] overflow-hidden bg-white pt-[4px] shadow-[3px_0_3px_#38578e] ${serif} text-[13px] leading-[14.7px]`}>
      <svg viewBox="0 0 522 378" className="absolute top-0 left-0 h-[378px] w-[522px]" fill="none">
        <path d="M120 -2C97 8 77.500 30 77.500 63V380M428 -2C450 8 471.500 33 471.500 63V380" stroke="#222" strokeWidth="3.600" />
        <path d="M120 -2C97 8 77.500 30 77.500 63V380M428 -2C450 8 471.500 33 471.500 63V380" stroke="#aaa" strokeWidth="1.500" />
      </svg>
      <div className="relative">
        <div className="flex h-[14.700px] items-center pl-[108px] text-[#151515]">
          <svg viewBox="0 0 9 9" className="mr-[6px] h-[9px] w-[9px]"><path d="m0 0 9 4.500L0 9l3-4.500z" fill="#222" /></svg>
          <Fit className="w-[154px]">In this chapter, You will learn</Fit>
        </div>
        {rows.map((r, i) => (
          <div key={i} className={`flex h-[14.700px] items-center pl-[139px] ${r.c}`}>
            <span className={`mt-[1px] mr-[8px] h-[7px] w-[7px] rounded-full ${r.cont ? '' : 'border border-current opacity-90'}`} />
            <Fit className={r.w}>{r.t}</Fit>
            {r.extra && <Fit className="ml-[2px] w-[45px] text-[11px]">interfaces</Fit>}
          </div>
        ))}
        <div className={`flex h-[14.700px] items-center pl-[171px] ${P}`}><span className="mr-[11px] h-[3px] w-[3px] bg-[#59407a]" /><Fit className="w-[231px]">collection usage as data transferable object &amp;</Fit></div>
        <div className={`flex h-[14.700px] items-center pl-[171px] ${P}`}><span className="mr-[11px] h-[3px] w-[3px] bg-[#59407a]" /><Fit className="w-[170px]">collection usage as mini database</Fit></div>
        <div className="absolute top-[15px] left-[154px] h-[13px] w-px bg-[#333]" />
        <svg viewBox="0 0 5 12" className="absolute top-[23px] left-[178px] h-[12px] w-[5px]" fill="none" stroke="#333"><path d="M0 .5h5M2.500 0v12M0 11.500h5" strokeWidth=".8" /></svg>
      </div>
    </div>
  );
}

function Workspace() {
  return (
    <div className="flex h-[378px] bg-linear-to-b from-[#8fafe1] via-[#4063a0] via-62% to-[#6890d2]">
      <div className="flex w-[17px] justify-center bg-[#a3c0ea]">
        <div className="flex h-full w-[10px] flex-col items-center bg-white">
          <svg viewBox="0 0 10 378" className="h-[378px] w-[10px]">
            <path d="M5 3V378" stroke="#848fa3" strokeWidth="1.500" strokeDasharray="1.200 6.500" />
            {['2', '3', '4', '5', '6', '7'].map((n, i) => (
              <g key={n}><path d={`M1 ${41 + i * 61.3}h8v9H1z`} fill="#fff" /><text x={-48 - i * 61.3} y="7.500" fontSize="7" fill="#556" transform="rotate(-90)">{n}</text></g>
            ))}
          </svg>
        </div>
      </div>
      <div className="ml-[181px]"><Document /></div>
      <div className="ml-auto flex w-[12px] flex-col items-center bg-[#c1d6f4]">
        <div className="flex h-[80px] w-[11px] justify-center border-l border-[#8ba7d3] bg-[#9db8df] pt-[4px]"><div className="rotate-180 self-start"><Drop /></div></div>
        <div className="flex h-[171px] w-[10px] flex-col items-center justify-center gap-[1px] rounded-[2px] border border-[#6f8dbd] bg-linear-to-r from-[#f4f8fe] to-[#c6daf5]">
          <div className="h-px w-[5px] bg-[#607ba8]" /><div className="h-px w-[5px] bg-[#607ba8]" /><div className="h-px w-[5px] bg-[#607ba8]" />
        </div>
        <div className="flex h-[89px] w-[11px] items-end justify-center border-l border-[#8ba7d3] bg-[#9db8df] pb-[4px]"><Drop /></div>
        <svg viewBox="0 0 8 36" className="h-[36px] w-[8px]" fill="#1f3358"><path d="m4 5 2 2.500H2zM4 8l2 2.500H2zM2 28.500h4L4 31zM2 31h4l-2 2.500z" /><circle cx="4" cy="19" r="2.300" fill="#dce0bd" stroke="#374663" /></svg>
      </div>
    </div>
  );
}

function StatusBar() {
  return (
    <div className="flex h-[16px] items-center border-t border-[#6888bd] bg-linear-to-b from-[#d9e8fd] via-[#bad3f6] to-[#c9dffb] text-[8.500px] leading-[12px] text-[#2f4a78]">
      <Fit className="ml-[5px] w-[43px]">Page: 1 of 1</Fit>
      <div className="ml-[6px] h-[13px] w-px bg-[#9db8df]" />
      <Fit className="ml-[6px] w-[53px]">Words: 22/236</Fit>
      <div className="ml-[5px] h-[13px] w-px bg-[#b0c7e8]" />
      <svg viewBox="0 0 12 10" className="ml-[7px] h-[10px] w-[12px]"><path d="m0 5 5 4 6-3-4-4z" fill="#fff" stroke="#6b7894" strokeWidth=".8" /><path d="m6 1 5 6m0-6L6 7" stroke="#d84a32" strokeWidth="1.600" /></svg>
      <div className="ml-[6px] h-[13px] w-px bg-[#9db8df]" />
      <div className="ml-auto flex h-full w-[200px] items-center bg-linear-to-b from-[#b5cff3] to-[#8fb3e6] pl-[4px]">
        <div className="flex items-center bg-[#c9dcf5]">
          <div className="flex h-[12px] w-[13px] items-center justify-center border border-[#d69b42] bg-[#fcd68c]"><div className="flex h-[8px] w-[8px] items-center justify-center border border-[#555] bg-white"><div className="h-[3px] w-[4px] border-y border-[#777]" /></div></div>
          <svg viewBox="0 0 52 10" className="h-[10px] w-[52px]" fill="none" stroke="#566a8e"><path d="M3 2h3.500v6H3zM8 2h3v6H8zM16.500 1.500h7v6h-7zM18 3.500h4M18 5.500h3M31 2h6M33 4.500h4M33 6h4M31 8h6M42.500 1.500h7M42.500 4h7M42.500 6.500h7M42.500 8.500h7" /><circle cx="23" cy="7" r="2" fill="#24819a" /></svg>
        </div>
        <Fit className="ml-[6px] w-[15px]">90%</Fit>
        <div className="ml-[11px] flex h-[10px] w-[10px] items-center justify-center rounded-full border border-[#58749f] bg-[#eaf2fd]"><div className="h-px w-[5px] bg-[#345]" /></div>
        <svg viewBox="0 0 74 12" className="h-[12px] w-[74px]"><path d="M0 6h74" stroke="#e8f1fd" /><path d="M37 3v6" stroke="#53709d" /><path d="M30 1h6v7l-3 3-3-3z" fill="#dce9fb" stroke="#5a75a3" /></svg>
        <div className="flex h-[10px] w-[10px] items-center justify-center rounded-full border border-[#58749f] bg-[#eaf2fd]"><svg viewBox="0 0 6 6" className="h-[6px] w-[6px]"><path d="M0 3h6M3 0v6" stroke="#234" /></svg></div>
      </div>
    </div>
  );
}

function Word() {
  return (
    <div className="h-[513px] w-[913px] overflow-hidden">
      <WordTitle />
      <Tabs />
      <div className="flex h-[67px] gap-[3px] border-t border-b-2 border-[#9ebfe8] border-b-[#86a8da] bg-linear-to-b from-[#d7e5f6] to-[#c8dcf4] pt-px pl-px">
        <Clipboard /><FontGroup /><ParagraphGroup /><StylesGroup /><EditingGroup />
      </div>
      <Ruler />
      <Workspace />
      <StatusBar />
    </div>
  );
}

/* ---------- recorded desktop ---------- */

function Chat() {
  return (
    <div className="flex h-[597px] w-[279px] flex-col overflow-hidden bg-white text-[#666676]">
      <div className="relative flex h-[10px] justify-center text-[#333]">
        <svg viewBox="0 0 8 5" className="absolute top-0 left-[16px] h-[5px] w-[8px]"><path d="m0 0 4 4 4-4" fill="none" stroke="#555" /></svg>
        <Fit className="-mt-[6px] w-[25px] text-[10.500px] leading-[14px] font-semibold">Chat</Fit>
      </div>
      <div className="mt-[459px] flex h-[22px] items-center bg-[#f7f7fb]">
        <svg viewBox="0 0 12 12" className="ml-[34px] h-[12px] w-[12px]" fill="none" stroke="#6e7384"><circle cx="4.500" cy="3" r="2.300" /><path d="M5 10.500H.7q0-4 4.500-3.700" /><path d="M5.500 7 9 5.500 12 7v2.500q-1 2-3 2.500-3-1-3.500-3z" fill="#1070e4" stroke="none" /></svg>
        <Fit className="ml-[3px] w-[200px] text-[10.500px] leading-[14px]">Who can see your messages? Recording On</Fit>
      </div>
      <div className="mt-[13px] flex items-center text-[10.500px] leading-[14px] text-[#444]">
        <Fit className="ml-[15px] w-[12px]">To:</Fit><Fit className="ml-[6px] w-[89px]">Hosts and panelists</Fit>
        <svg viewBox="0 0 12 12" className="mr-[16px] ml-auto h-[12px] w-[12px]" fill="none" stroke="#6c7079"><circle cx="6" cy="6" r="5.400" /><path d="M3.500 7q2.500 3 5 0" /><path d="M4.200 3.500v1.500M7.800 3.500v1.500" /></svg>
      </div>
      <div className="mt-[9px] ml-[14px] flex items-center text-[11.500px] leading-[16px] text-[#858591]">
        <div className="h-[15px] w-px bg-[#333]" /><Fit className="w-[197px]">Your text can only be seen by panelists</Fit>
      </div>
    </div>
  );
}

function GuestSlot({ children, className = '' }: { children: ReactNode; className?: string }) {
  return <div className="flex h-full w-[42.800px] shrink-0 justify-center"><div className={`flex h-full w-[42px] items-center justify-center ${className}`}>{children}</div></div>;
}

function GuestTaskbar() {
  return (
    <div className="flex h-[35px] w-[1192px] bg-[#ededed]">
      <div className="flex w-[42px] items-center justify-center"><WinLogo className="h-[14px] w-[14px]" /></div>
      <div className="flex w-[300px] items-center border border-[#c8c8c8] bg-white pl-[9px]">
        <Lens className="h-[15px] w-[15px]" />
        <Fit className="mt-[2px] ml-[10px] w-[112px] text-[13px] leading-[18px] text-[#444]">Type here to search</Fit>
      </div>
      <GuestSlot><Ring className="h-[14px] w-[14px]" /></GuestSlot>
      <GuestSlot><TaskView className="-ml-[2px] h-[14px] w-[15px]" /></GuestSlot>
      <GuestSlot><Edge className="h-[21px] w-[21px]" /></GuestSlot>
      <GuestSlot><Folder className="h-[18px] w-[19px]" /></GuestSlot>
      <GuestSlot><Store className="h-[21px] w-[21px]" /></GuestSlot>
      <GuestSlot><div className="flex h-[21px] w-[21px] items-center justify-center bg-white"><svg viewBox="0 0 12 13" className="h-[13px] w-[12px]" fill="#b82d28"><path d="M0 4h5v3H0zM7 4h5v3H7zM1 8h4v5H1zM7 8h4v5H7z" /><path d="M6 4Q3-1 1.500 1.500T6 4q3-5 4.500-2.500T6 4" fill="none" stroke="#b82d28" strokeWidth="1.200" /></svg></div></GuestSlot>
      <GuestSlot><svg viewBox="0 0 22 20" className="h-[20px] w-[22px]"><path d="M0 7 11 0l11 7v5H0z" fill="#1057a5" /><path d="M2 7h18l-9 7z" fill="#fff" /><path d="m0 7 11 7 11-7v13H0z" fill="#2594e2" /><path d="m0 20 22-13v13z" fill="#39b4f2" /></svg></GuestSlot>
      <GuestSlot><Recorder className="h-[21px] w-[21px]" /></GuestSlot>
      <GuestSlot className="border-b-2 border-[#e0245e] bg-[#f9f9fa]"><ZoomApp className="h-[21px] w-[21px]" /></GuestSlot>
      <GuestSlot><Snip className="h-[21px] w-[21px]" /></GuestSlot>
      <GuestSlot><div className="flex h-full w-[35px] items-center justify-center border-b-2 border-[#e0245e]"><ChromeApp className="h-[20px] w-[20px]" /></div></GuestSlot>
      <GuestSlot className="border-b-2 border-[#fc7d1c] bg-[#feb373]"><div className="flex h-[21px] w-[21px] items-center justify-center bg-[#f71c5a]"><svg viewBox="0 0 14 14" className="h-[14px] w-[14px]" fill="none" stroke="#fff"><circle cx="7" cy="8.500" r="3.500" strokeWidth="2.500" /><path d="m7 8.500 4.500-4.500" strokeWidth="1.500" /><path d="M2 4.500Q7-1 11.500 3" strokeDasharray="1 1" /></svg></div></GuestSlot>
      <div className="ml-[56px] flex items-center text-[10.500px] leading-[14px] text-[#222]">
        <Up className="h-[7px] w-[11px]" />
        <svg viewBox="0 0 11 13" className="ml-[10px] h-[13px] w-[11px]" fill="none" stroke="#222"><path d="M1 3.500h6v6H1zM7 6l3-1.500v4L7 7M2 1.500Q5.500-.5 9 1.500M2 11.500q3.500 2 7 0" /></svg>
        <svg viewBox="0 0 13 13" className="ml-[9px] h-[13px] w-[13px]"><circle cx="6.500" cy="6.500" r="5.500" fill="#fff" stroke="#da6638" strokeWidth="1.600" /></svg>
        <svg viewBox="0 0 14 10" className="ml-[7px] h-[10px] w-[14px]" fill="none" stroke="#222" strokeWidth="1.200"><path d="M5 3.500h7.500v5h-8M13.200 5v2M1 0v2M4 0v2M.5 2.500h4v2h-4zM2.500 4v4" /><path d="M6 5h4v2H6z" fill="#222" /></svg>
        <svg viewBox="0 0 15 14" className="ml-[7px] h-[14px] w-[15px]" fill="none" stroke="#222"><path d="M14 7V.5L1 2v9h8M4 8q0-4 4-3.500M4 8h3" /><circle cx="11.500" cy="10.500" r="3" fill="#1b70c7" stroke="none" /></svg>
        <Wifi className="ml-[8px] h-[11px] w-[11px]" />
        <svg viewBox="0 0 14 11" className="ml-[7px] h-[11px] w-[14px]" fill="none" stroke="#222"><path d="M.5 4H2l3-3v9L2 7H.5z" /><path d="M7 3.500q1.500 2 0 4M9 2q2.500 3.500 0 7" /><path d="M11 1q3.500 4.500 0 9" stroke="#aaa" /></svg>
        <Fit className="ml-[9px] w-[20px]">ENG</Fit>
        <div className="ml-[12px] flex w-[50px] flex-col items-center gap-[2px]"><Fit className="w-[24px]">22:36</Fit><Fit className="w-[50px]">16-02-2022</Fit></div>
        <div className="relative ml-[16px]"><Bubble className="h-[14px] w-[14px]" /><span className="absolute top-[6px] left-[6px] flex h-[15px] w-[15px] items-center justify-center rounded-full border border-[#999] bg-[#cfcfcf] text-[10px] text-[#222]">2</span></div>
      </div>
      <div className="mr-[2px] ml-auto h-full w-px bg-[#c4c4c4]" />
    </div>
  );
}

export default function App() {
  return (
    <div className={`flex h-[766px] w-[1365px] flex-col overflow-hidden bg-black text-black ${ui}`}>
      <TitleBar />
      <MenuBar />
      <div className="h-[632px] bg-black pl-[87px]">
        <div className="flex h-[597px] w-[1192px]">
          <div className="flex w-[913px] flex-col bg-[#1a1a1a]">
            <div className="flex h-[32px] items-start overflow-hidden text-[10px] leading-[12px] text-[#d8d8d8]">
              <div className="-mt-[6px] ml-[13px] h-[10px] w-[10px] rounded-full bg-[#e45e43] shadow-[0_0_4px_#b33]" />
              <Fit className="-mt-[7px] ml-[5px] w-[45px]">Recording</Fit>
              <div className="-mt-[5px] ml-auto h-[8px] w-[8px] bg-[#d8d8d8]" /><Fit className="-mt-[7px] mr-[13px] ml-[7px] w-[20px]">View</Fit>
            </div>
            <Word />
          </div>
          <Chat />
        </div>
        <GuestTaskbar />
      </div>
      <Player />
      <HostTaskbar />
    </div>
  );
}
